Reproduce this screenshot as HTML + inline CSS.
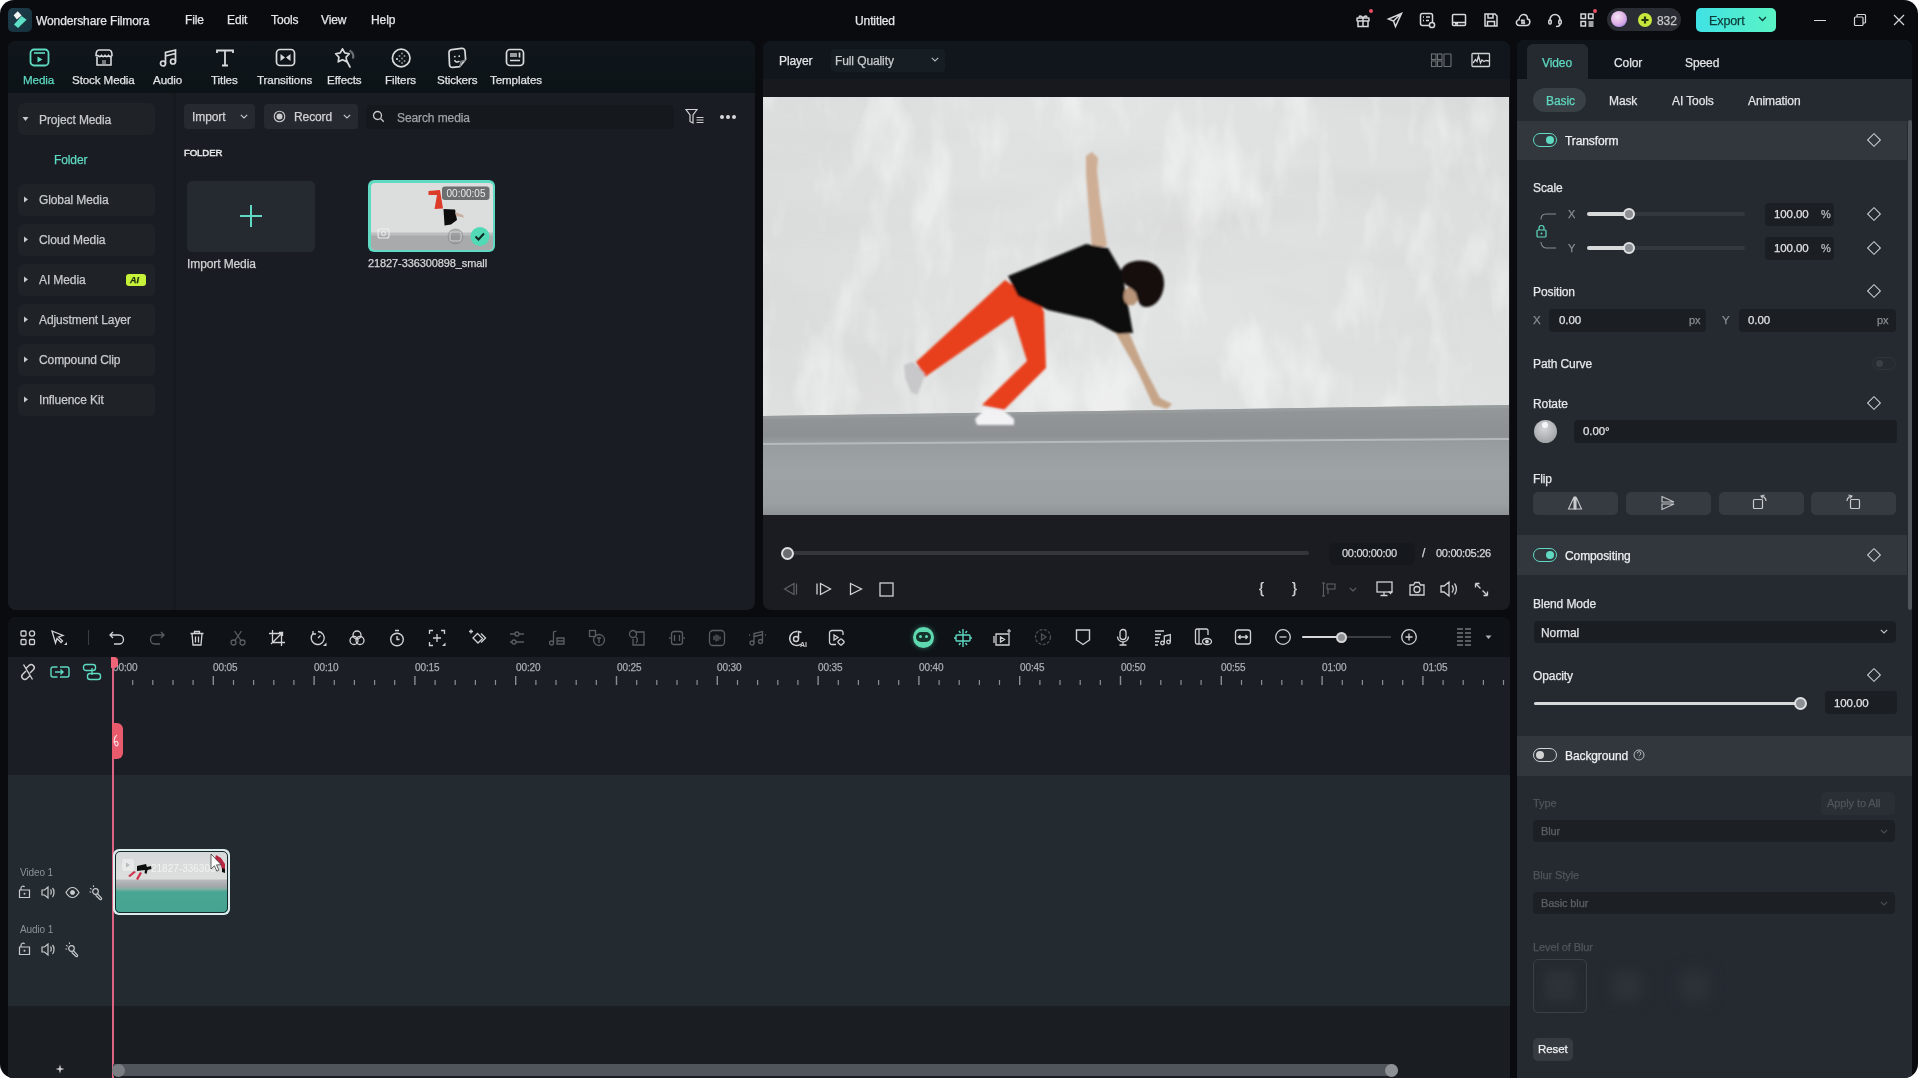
<!DOCTYPE html>
<html><head><meta charset="utf-8">
<style>
*{box-sizing:border-box;margin:0;padding:0}
html,body{width:1920px;height:1080px;overflow:hidden;background:#fff}
body{font-family:"Liberation Sans",sans-serif;color:#e6e8ea;position:relative}
.a{position:absolute}
#win{position:absolute;left:0;top:0;width:1918px;height:1078px;background:#090b0e;border-radius:14px;overflow:hidden}
.t{position:absolute;white-space:nowrap;line-height:1;will-change:transform;-webkit-text-stroke:0.25px currentColor;letter-spacing:-0.1px}
svg{position:absolute;overflow:visible;will-change:transform}
.ml{font-size:11.6px;color:#e0e2e4}
.si{left:18px;width:137px;border-radius:6px;background:#1f2328}
.sl{left:39px;font-size:12px;color:#c8cacc}
.lb{left:1533px;font-size:12px;color:#e6e8ea}
.tg{left:1533px;width:24px;height:14px;border-radius:7px;border:1.5px solid #5fd9c1}
.tk{left:1545.5px;width:8px;height:8px;border-radius:50%;background:#5fd9c1}
.dm{left:1868.5px;width:10px;height:10px;border:1.3px solid #d6d8da;transform:rotate(45deg)}
.fb{top:492px;width:85px;height:23px;border-radius:5px;background:#363b41}
</style></head><body>
<div id="win">
  <!-- ===== TITLE BAR ===== -->
  <div class="a" style="left:8px;top:8px;width:24px;height:24px;border-radius:5px;background:linear-gradient(135deg,#1f3d4c,#15303c)"></div>
  <svg style="left:0;top:0" width="40" height="40" viewBox="0 0 40 40">
    <path d="M17.8 11.3 L21.6 15.4 L16.8 19.4 L13.6 15.3 Z" fill="#f2f4f4"/>
    <path d="M21.6 16 L26.6 19.8 L18 28 L14 24.6 Z" fill="#5de0c6"/>
  </svg>
  <div class="t" style="left:36px;top:15px;font-size:12px;color:#e4e6e8">Wondershare Filmora</div>
  <div class="t" style="left:185px;top:14px;font-size:12px;color:#e4e6e8">File</div>
  <div class="t" style="left:227px;top:14px;font-size:12px;color:#e4e6e8">Edit</div>
  <div class="t" style="left:271px;top:14px;font-size:12px;color:#e4e6e8">Tools</div>
  <div class="t" style="left:321px;top:14px;font-size:12px;color:#e4e6e8">View</div>
  <div class="t" style="left:371px;top:14px;font-size:12px;color:#e4e6e8">Help</div>
  <div class="t" style="left:855px;top:15px;font-size:12px;color:#e4e6e8">Untitled</div>
  <!-- right icons -->
  <svg style="left:1355px;top:12px" width="16" height="16" viewBox="0 0 16 16" fill="none" stroke="#d6d8da" stroke-width="1.5">
    <rect x="2" y="6" width="12" height="3" rx="0.5"/><path d="M3 9v5.5h10V9M8 6v8.5M8 6C6 3 3.5 3.5 4.5 5.5M8 6c2-3 4.5-2.5 3.5-0.5"/>
  </svg>
  <div class="a" style="left:1369px;top:9px;width:4px;height:4px;border-radius:50%;background:#e8506a"></div>
  <svg style="left:1387px;top:12px" width="16" height="16" viewBox="0 0 16 16" fill="none" stroke="#d6d8da" stroke-width="1.5">
    <path d="M14.5 1.5L1.5 7l5 2 2 5.5 6-13z M6.5 9l8-7.5"/>
  </svg>
  <svg style="left:1419px;top:12px" width="16" height="16" viewBox="0 0 16 16" fill="none" stroke="#d6d8da" stroke-width="1.5">
    <rect x="1.5" y="1.5" width="12" height="12" rx="2"/><path d="M4 5h1M7 5h4M4 8.5h1M7 8.5h3"/><circle cx="13" cy="13" r="2.6" fill="#0a0c0f"/>
  </svg>
  <svg style="left:1451px;top:12px" width="16" height="16" viewBox="0 0 16 16" fill="none" stroke="#d6d8da" stroke-width="1.5">
    <rect x="1.5" y="2.5" width="13" height="11" rx="1"/><path d="M1.5 10.5h13M4 12h3"/>
  </svg>
  <svg style="left:1483px;top:12px" width="16" height="16" viewBox="0 0 16 16" fill="none" stroke="#d6d8da" stroke-width="1.5">
    <path d="M2 2h10l2 2v10H2z M5 2v4h5V2 M4.5 14v-4.5h7V14"/>
  </svg>
  <svg style="left:1515px;top:12px" width="16" height="16" viewBox="0 0 16 16" fill="none" stroke="#d6d8da" stroke-width="1.5">
    <path d="M4.5 13.5C2 13.5 1 11.5 1.5 9.8 2 8.3 3.3 7.8 4 7.8 4.3 4.5 6.5 2.5 8.5 2.5 11 2.5 12.5 4.5 12.5 7 14.3 7.3 15 9 14.8 10.5 14.5 12.5 13 13.5 11.5 13.5z M7 8v4M9 7.5v4M6 9l1-1 1 1M8 10.5l1 1 1-1"/>
  </svg>
  <svg style="left:1547px;top:12px" width="16" height="16" viewBox="0 0 16 16" fill="none" stroke="#d6d8da" stroke-width="1.5">
    <path d="M3 9V7.5a5 5 0 0 1 10 0V9"/><rect x="1.8" y="8" width="2.4" height="4" rx="1"/><rect x="11.8" y="8" width="2.4" height="4" rx="1"/><path d="M13 12c0 1.5-1.5 2.5-4 2.5"/>
  </svg>
  <svg style="left:1579px;top:12px" width="16" height="16" viewBox="0 0 16 16" fill="none" stroke="#d6d8da" stroke-width="1.5">
    <rect x="2" y="2" width="4.5" height="4.5"/><rect x="9.5" y="2" width="4.5" height="4.5"/><rect x="2" y="9.5" width="4.5" height="4.5"/><path d="M9.5 10h5M9.5 12h5M9.5 14h5"/>
  </svg>
  <div class="a" style="left:1593px;top:9px;width:4px;height:4px;border-radius:50%;background:#e8506a"></div>
  <!-- user pill -->
  <div class="a" style="left:1607px;top:8px;width:74px;height:23px;border-radius:12px;background:#2a2d33"></div>
  <div class="a" style="left:1611px;top:11px;width:16px;height:16px;border-radius:50%;background:radial-gradient(circle at 40% 35%,#f4e6f4 0%,#e0b0e6 50%,#b090e8 80%,#8ad0f0 100%)"></div>
  <div class="a" style="left:1638px;top:12.5px;width:14px;height:14px;border-radius:50%;background:#c8e83c"></div>
  <svg style="left:1638px;top:12.5px" width="14" height="14" viewBox="0 0 14 14"><path d="M7 3.5v7M3.5 7h7" stroke="#2a3a10" stroke-width="2.2"/></svg>
  <div class="t" style="left:1657px;top:15px;font-size:12px;color:#c6c8ca">832</div>
  <!-- export -->
  <div class="a" style="left:1696px;top:8px;width:80px;height:24px;border-radius:5px;background:linear-gradient(90deg,#40e2e4,#5af3c4)"></div>
  <div class="t" style="left:1709px;top:15px;font-size:12.5px;color:#0c3b38">Export</div>
  <svg style="left:1758px;top:16px" width="9" height="6" viewBox="0 0 9 6"><path d="M1 1l3.5 3.5L8 1" fill="none" stroke="#0c3b38" stroke-width="1.3"/></svg>
  <!-- window controls -->
  <div class="a" style="left:1814px;top:20px;width:12px;height:1.3px;background:#d6d8da"></div>
  <svg style="left:1853px;top:13px" width="14" height="14" viewBox="0 0 14 14" fill="none" stroke="#d6d8da" stroke-width="1.2">
    <rect x="1.5" y="4" width="8.5" height="8.5" rx="1"/><path d="M4 4V2.5a1 1 0 0 1 1-1h6.5a1 1 0 0 1 1 1V9a1 1 0 0 1-1 1H10"/>
  </svg>
  <svg style="left:1893px;top:14px" width="12" height="12" viewBox="0 0 12 12" stroke="#d6d8da" stroke-width="1.2"><path d="M1 1l10 10M11 1L1 11"/></svg>
  <!-- ===== MEDIA PANEL ===== -->
  <div class="a" style="left:8px;top:41px;width:747px;height:569px;background:#1a1c23;border-radius:8px;overflow:hidden">
    <div class="a" style="left:0;top:0;width:747px;height:52px;background:linear-gradient(180deg,#10161b,#0c1317)"></div>
    <div class="a" style="left:0;top:52px;width:165px;height:517px;background:#191c22"></div>
    <div class="a" style="left:165px;top:52px;width:3px;height:517px;background:#16191d"></div>
  </div>
  <!-- toolbar icons -->
  <svg style="left:29px;top:48px" width="22" height="20" viewBox="0 0 22 20" fill="none" stroke="#5fd9c1" stroke-width="1.8">
    <rect x="1.5" y="1.5" width="18" height="16" rx="3.5"/><path d="M5 5h11" stroke-width="1.6"/><path d="M8.5 8.5v6l5-3z" fill="#5fd9c1" stroke="none"/>
  </svg>
  <div class="t ml" style="left:23px;top:74px;color:#5fd9c1">Media</div>
  <svg style="left:94px;top:48px" width="20" height="20" viewBox="0 0 20 20" fill="none" stroke="#d8dadc" stroke-width="1.6">
    <path d="M3 8.5V17h14V8.5"/><path d="M2 7.5C2 4 3 2 5 2h10c2 0 3 2 3 5.5-1 1.5-2.5 1.5-3.5 0-1 1.5-2.5 1.5-3.5 0-1 1.5-2.5 1.5-3.5 0-1 1.5-2.5 1.5-3.5 0z"/><path d="M8 13h4M8 15h4" stroke-width="1.1"/>
  </svg>
  <div class="t ml" style="left:72px;top:74px">Stock Media</div>
  <svg style="left:158px;top:48px" width="20" height="20" viewBox="0 0 20 20" fill="none" stroke="#d8dadc" stroke-width="1.7">
    <circle cx="5" cy="15.5" r="2.5"/><circle cx="15" cy="13.5" r="2.5"/><path d="M7.5 15.5V4.5L17.5 2v11.5M7.5 8l10-2.5"/>
  </svg>
  <div class="t ml" style="left:153px;top:74px">Audio</div>
  <svg style="left:215px;top:48px" width="20" height="20" viewBox="0 0 20 20" fill="none" stroke="#d8dadc" stroke-width="1.8">
    <path d="M2 5V2.5h16V5M10 2.5v15M7 17.5h6"/>
  </svg>
  <div class="t ml" style="left:211px;top:74px">Titles</div>
  <svg style="left:275px;top:48px" width="21" height="20" viewBox="0 0 21 20" fill="none" stroke="#d8dadc" stroke-width="1.7">
    <rect x="1.5" y="1.5" width="18" height="16" rx="3.5"/><path d="M5.5 6v7l4.5-3.5z M15.5 6v7L11 9.5z" fill="#d8dadc" stroke="none"/>
  </svg>
  <div class="t ml" style="left:257px;top:74px">Transitions</div>
  <svg style="left:334px;top:47px" width="22" height="22" viewBox="0 0 22 22" fill="none" stroke="#d8dadc" stroke-width="1.7" stroke-linejoin="round">
    <path d="M8.50 1.80 L10.73 5.93 L15.35 6.78 L12.11 10.17 L12.73 14.82 L8.50 12.80 L4.27 14.82 L4.89 10.17 L1.65 6.78 L6.27 5.93 Z"/><path d="M12.5 13.5l3.5 6.5" stroke-linecap="round"/><path d="M15.5 3.5a7 7 0 0 1 3.5 8" stroke="#6a6e72" stroke-width="2.2"/>
  </svg>
  <div class="t ml" style="left:327px;top:74px">Effects</div>
  <svg style="left:390px;top:47px" width="22" height="22" viewBox="0 0 22 22" fill="none" stroke="#d8dadc" stroke-width="1.7">
    <circle cx="11.2" cy="11" r="8.8"/><g fill="#8a8e92" stroke="none"><circle cx="7" cy="12" r="1.1" fill="#d8dadc"/><circle cx="9.5" cy="9" r="1"/><circle cx="9.5" cy="14" r="1"/><circle cx="12" cy="6.5" r="1"/><circle cx="12" cy="11.5" r="1"/><circle cx="12" cy="16" r="1"/><circle cx="14.5" cy="9" r="1"/><circle cx="14.5" cy="14" r="1"/></g>
  </svg>
  <div class="t ml" style="left:385px;top:74px">Filters</div>
  <svg style="left:446px;top:47px" width="22" height="22" viewBox="0 0 22 22" fill="none" stroke="#d8dadc" stroke-width="1.7" stroke-linejoin="round">
    <path d="M3 6.5Q2.6 3.2 5.8 2.7L15.5 1.4Q18.6 1 19 4.2L19.6 12.5L13.6 19.6L7 20.4Q3.8 20.8 3.5 17.6Z"/><path d="M19.6 13L15 14.5L14 19.5" stroke="#7a7e82" stroke-width="1.6"/><circle cx="8.8" cy="9.6" r=".9" fill="#d8dadc" stroke="none"/><circle cx="13.2" cy="9.2" r=".9" fill="#d8dadc" stroke="none"/><path d="M8.5 13.2Q10 16.2 13.5 14.2" stroke-width="1.5"/>
  </svg>
  <div class="t ml" style="left:437px;top:74px">Stickers</div>
  <svg style="left:505px;top:48px" width="20" height="20" viewBox="0 0 20 20" fill="none" stroke="#d8dadc" stroke-width="1.7">
    <rect x="1.5" y="1.5" width="17" height="16" rx="3.5"/><rect x="5" y="5" width="7" height="4" fill="#9a9c9e" stroke="none"/><path d="M14.5 4.5v5M5 12.5h10"/>
  </svg>
  <div class="t ml" style="left:490px;top:74px">Templates</div>

  <!-- sidebar -->
  <div class="a si" style="top:103px;height:32px"></div>
  <svg style="left:22px;top:116px" width="7" height="6" viewBox="0 0 7 6"><path d="M0.5 1h6L3.5 5z" fill="#c8cacc"/></svg>
  <div class="t sl" style="top:114px">Project Media</div>
  <div class="t sl" style="left:54px;top:154px;color:#5fd9c1">Folder</div>
  <div class="a si" style="top:184px;height:32px"></div>
  <svg style="left:23px;top:196px" width="6" height="7" viewBox="0 0 6 7"><path d="M1 0.5v6L5 3.5z" fill="#c8cacc"/></svg>
  <div class="t sl" style="top:194px">Global Media</div>
  <div class="a si" style="top:224px;height:32px"></div>
  <svg style="left:23px;top:236px" width="6" height="7" viewBox="0 0 6 7"><path d="M1 0.5v6L5 3.5z" fill="#c8cacc"/></svg>
  <div class="t sl" style="top:234px">Cloud Media</div>
  <div class="a si" style="top:264px;height:32px"></div>
  <svg style="left:23px;top:276px" width="6" height="7" viewBox="0 0 6 7"><path d="M1 0.5v6L5 3.5z" fill="#c8cacc"/></svg>
  <div class="t sl" style="top:274px">AI Media</div>
  <div class="a" style="left:126px;top:274px;width:20px;height:12px;border-radius:3px;background:#c6f23a"></div>
  <div class="t" style="left:130px;top:275.5px;font-size:9px;font-weight:bold;font-style:italic;color:#1a2a10">AI</div>
  <div class="a si" style="top:304px;height:32px"></div>
  <svg style="left:23px;top:316px" width="6" height="7" viewBox="0 0 6 7"><path d="M1 0.5v6L5 3.5z" fill="#c8cacc"/></svg>
  <div class="t sl" style="top:314px">Adjustment Layer</div>
  <div class="a si" style="top:344px;height:32px"></div>
  <svg style="left:23px;top:356px" width="6" height="7" viewBox="0 0 6 7"><path d="M1 0.5v6L5 3.5z" fill="#c8cacc"/></svg>
  <div class="t sl" style="top:354px">Compound Clip</div>
  <div class="a si" style="top:384px;height:32px"></div>
  <svg style="left:23px;top:396px" width="6" height="7" viewBox="0 0 6 7"><path d="M1 0.5v6L5 3.5z" fill="#c8cacc"/></svg>
  <div class="t sl" style="top:394px">Influence Kit</div>

  <!-- media content toolbar -->
  <div class="a" style="left:184px;top:104px;width:71px;height:25px;border-radius:4px;background:#262a30"></div>
  <div class="t" style="left:192px;top:111px;font-size:12px;color:#d0d2d4">Import</div>
  <svg style="left:240px;top:114px" width="8" height="5" viewBox="0 0 8 5"><path d="M0.8 0.8L4 4 7.2 0.8" fill="none" stroke="#c8cacc" stroke-width="1.1"/></svg>
  <div class="a" style="left:264px;top:104px;width:94px;height:25px;border-radius:4px;background:#262a30"></div>
  <svg style="left:273px;top:110px" width="13" height="13" viewBox="0 0 13 13"><circle cx="6.5" cy="6.5" r="5.3" fill="none" stroke="#c8cacc" stroke-width="1.1"/><circle cx="6.5" cy="6.5" r="3" fill="#c8cacc"/></svg>
  <div class="t" style="left:294px;top:111px;font-size:12px;color:#d0d2d4">Record</div>
  <svg style="left:343px;top:114px" width="8" height="5" viewBox="0 0 8 5"><path d="M0.8 0.8L4 4 7.2 0.8" fill="none" stroke="#c8cacc" stroke-width="1.1"/></svg>
  <div class="a" style="left:366px;top:105px;width:308px;height:24px;border-radius:4px;background:#15181c"></div>
  <svg style="left:372px;top:110px" width="13" height="13" viewBox="0 0 13 13" fill="none" stroke="#c8cacc" stroke-width="1.3"><circle cx="5.5" cy="5.5" r="4"/><path d="M8.5 8.5l3.3 3.3"/></svg>
  <div class="t" style="left:397px;top:112px;font-size:12px;color:#9ea2a6">Search media</div>
  <svg style="left:685px;top:108px" width="20" height="17" viewBox="0 0 20 17" fill="none" stroke="#d0d2d4" stroke-width="1.2"><path d="M1 1.5h11L8 7v8l-3-1.5V7z"/><path d="M11.5 9.5h7M11.5 12h7M11.5 14.5h7"/></svg>
  <div class="a" style="left:720px;top:115px;width:4px;height:4px;border-radius:50%;background:#d8dadc"></div>
  <div class="a" style="left:726px;top:115px;width:4px;height:4px;border-radius:50%;background:#d8dadc"></div>
  <div class="a" style="left:732px;top:115px;width:4px;height:4px;border-radius:50%;background:#d8dadc"></div>

  <div class="t" style="left:184px;top:147.5px;font-size:9.6px;color:#e6e8ea;-webkit-text-stroke:0.45px #e6e8ea">FOLDER</div>
  <!-- import media tile -->
  <div class="a" style="left:187px;top:181px;width:128px;height:71px;border-radius:5px;background:#242a30"></div>
  <svg style="left:239px;top:204px" width="24" height="24" viewBox="0 0 24 24"><path d="M12 1v22M1 12h22" stroke="#5fd9c1" stroke-width="2"/></svg>
  <div class="t" style="left:187px;top:258px;font-size:12px;color:#d0d2d4">Import Media</div>
  <!-- media thumbnail -->
  <div class="a" style="left:368px;top:180px;width:127px;height:72px;border-radius:6px;background:#5fd9c1"></div>
  <svg style="left:370.5px;top:182.5px" width="122" height="67" viewBox="0 0 122 67">
    <defs><clipPath id="thc"><rect x="0" y="0" width="122" height="67" rx="4"/></clipPath><filter id="tb"><feGaussianBlur stdDeviation="0.7"/></filter></defs>
    <g clip-path="url(#thc)">
      <rect width="122" height="67" fill="#dcdddd"/>
      <rect x="0" y="51" width="122" height="16" fill="#a8aaac"/>
      <rect x="0" y="49.5" width="122" height="3" fill="#bcbebf"/>
      <g filter="url(#tb)">
        <path d="M57.5 8 L69 7 L72 25.5 L63.5 26 L66 12 L57.5 12 Z" fill="#dd3a2a"/>
        <path d="M72.5 26 L84 26.5 L86 37 L80 41.5 L73.5 42.5 Z" fill="#111"/>
        <path d="M84 29 L92 32 L93 34.5 L85 33 Z" fill="#c8b0a0"/>
      </g>
      <rect x="71" y="3.5" width="47.5" height="13.5" rx="3" fill="#656769" opacity="0.95"/>
      <text x="95" y="13.7" text-anchor="middle" font-family="Liberation Sans" font-size="10" fill="#e8eaec">00:00:05</text>
      <rect x="7" y="46" width="11" height="9" rx="2" fill="none" stroke="#f4f4f4" stroke-width="1.1" opacity="0.85"/>
      <circle cx="12.5" cy="50.5" r="2" fill="none" stroke="#f4f4f4" stroke-width="1" opacity="0.85"/>
      <circle cx="84.5" cy="53.5" r="8" fill="#8a8c8e" opacity="0.6"/>
      <rect x="79" y="49" width="11" height="9" rx="2" fill="none" stroke="#e8e8e8" stroke-width="1" opacity="0.7"/>
      <circle cx="109" cy="53.5" r="9.5" fill="#52d9b6"/>
      <path d="M104.5 53.5l3 3 5.5-6" fill="none" stroke="#0d2a22" stroke-width="2"/>
    </g>
  </svg>
  <div class="t" style="left:368px;top:258px;font-size:11px;color:#d6d8da">21827-336300898_small</div>
  <!-- ===== PLAYER PANEL ===== -->
  <div class="a" style="left:763px;top:41px;width:747px;height:569px;background:#1a1c21;border-radius:8px;overflow:hidden">
    <div class="a" style="left:0;top:0;width:747px;height:38px;background:#10161b"></div>
    <div class="a" style="left:0;top:38px;width:747px;height:18px;background:#17191e"></div>
  </div>
  <div class="t" style="left:779px;top:55px;font-size:12px;color:#e2e4e6">Player</div>
  <div class="a" style="left:831px;top:49px;width:114px;height:23px;border-radius:4px;background:#161d23"></div>
  <div class="t" style="left:835px;top:55px;font-size:12px;color:#c8cacc">Full Quality</div>
  <svg style="left:931px;top:57px" width="8" height="5" viewBox="0 0 8 5"><path d="M0.8 0.8L4 4 7.2 0.8" fill="none" stroke="#b8babc" stroke-width="1.1"/></svg>
  <svg style="left:1431px;top:53px" width="21" height="15" viewBox="0 0 21 15" fill="none" stroke="#6e7276" stroke-width="1.1">
    <rect x="0.5" y="1" width="4.5" height="5.5"/><rect x="6.5" y="1" width="4.5" height="5.5"/><rect x="0.5" y="8" width="4.5" height="5.5"/><rect x="6.5" y="8" width="4.5" height="5.5"/><rect x="13" y="1" width="7" height="12.5" rx="0.5"/>
  </svg>
  <svg style="left:1471px;top:52px" width="20" height="16" viewBox="0 0 20 16" fill="none" stroke="#d0d2d4" stroke-width="1.3">
    <rect x="1" y="1.5" width="17.5" height="13" rx="0.8"/><path d="M2 11l2.5-3.5L6 9.5 7.5 4l2 7 1.5-3 2 1.5 2-1 3 0.5"/>
  </svg>
  <!-- video frame -->
  <svg style="left:763px;top:97px" width="746" height="418" viewBox="763 97 746 418">
    <defs>
      <linearGradient id="wallg" x1="0" y1="0" x2="1" y2="0">
        <stop offset="0" stop-color="#dcdedd"/><stop offset="0.45" stop-color="#e2e4e3"/><stop offset="1" stop-color="#dcdedd"/>
      </linearGradient>
      <linearGradient id="groundg" x1="0" y1="405" x2="0" y2="515" gradientUnits="userSpaceOnUse">
        <stop offset="0" stop-color="#939798"/><stop offset="0.28" stop-color="#8d9193"/><stop offset="0.34" stop-color="#979c9f"/><stop offset="0.6" stop-color="#9ea3a6"/><stop offset="0.9" stop-color="#9a9fa2"/><stop offset="1" stop-color="#8e9295"/>
      </linearGradient>
      <filter id="tex" x="0" y="0" width="100%" height="100%">
        <feTurbulence type="fractalNoise" baseFrequency="0.003 0.012" numOctaves="3" seed="11" result="n"/>
        <feColorMatrix in="n" type="matrix" values="0 0 0 0 0.6  0 0 0 0 0.6  0 0 0 0 0.6  -3 0 0 0 1.6"/>
      </filter>
      <filter id="tex2" x="0" y="0" width="100%" height="100%">
        <feTurbulence type="fractalNoise" baseFrequency="0.022 0.009" numOctaves="4" seed="5" result="n"/>
        <feColorMatrix in="n" type="matrix" values="0 0 0 0 1  0 0 0 0 1  0 0 0 0 1  3.5 0 0 0 -1.7"/>
      </filter>
      <linearGradient id="wallbot" x1="0" y1="0" x2="0" y2="1"><stop offset="0" stop-color="#e4e5e5" stop-opacity="0"/><stop offset="1" stop-color="#e4e5e5" stop-opacity="0.5"/></linearGradient>
      <filter id="bl2"><feGaussianBlur stdDeviation="1"/></filter>
    </defs>
    <rect x="763" y="97" width="746" height="418" fill="url(#wallg)"/>
    <rect x="763" y="97" width="746" height="320" filter="url(#tex)" opacity="0.3"/>
    <rect x="763" y="300" width="746" height="120" fill="url(#wallbot)"/>
    <rect x="763" y="97" width="746" height="320" filter="url(#tex2)" opacity="0.4"/>
    <path d="M763 416 L1509 405 L1509 515 L763 515 Z" fill="url(#groundg)"/>
    <path d="M763 416 L1509 405 L1509 408 L763 419 Z" fill="#9a9ea0" opacity="0.7"/>
    <path d="M763 444 L1509 439" stroke="#c4c8ca" stroke-width="2" opacity="0.7"/>
    <g filter="url(#bl2)">
      <!-- raised arm -->
      <path d="M1086 156 L1092 152 L1098 158 L1097 170 L1100 200 L1107 246 L1092 249 L1088 200 L1086 175 Z" fill="#cfae96"/>
      <!-- lower arm -->
      <path d="M1114 330 L1127 328 L1143 365 L1160 398 L1172 404 L1167 409 L1153 405 L1138 372 Z" fill="#c6a488"/>
      <!-- pants -->
      <path d="M1005 280 L916 362 L925 377 L1013 316 L1027 361 L982 405 L1004 410 L1046 368 L1044 312 L1040 304 Z" fill="#e8401e"/>
      <!-- shirt -->
      <path d="M1008 276 L1086 244 L1108 248 L1122 272 L1133 333 L1118 334 L1092 320 L1048 310 L1018 296 Z" fill="#0b0b0c"/>
      <!-- head -->
      <ellipse cx="1131" cy="296" rx="7.5" ry="9.5" fill="#b89478"/>
      <path d="M1121 277 C1118 266 1131 259 1144 261 C1157 262 1165 273 1164 285 C1163 297 1156 307 1146 307 C1139 307 1138 300 1136 293 C1132 287 1123 286 1121 277 Z" fill="#141110"/>
      <!-- shoes -->
      <path d="M904 365 L913 362 L925 374 L920 388 L917 395 L911 392 L905 378 Z" fill="#c8c8ca"/>
      <path d="M975 419 L985 409 L1003 410 L1014 419 L1014 425 L977 425 Z" fill="#f2f2f4"/>
    </g>
  </svg>
  <!-- scrubber -->
  <div class="a" style="left:793px;top:551px;width:516px;height:4px;border-radius:2px;background:#33373c"></div>
  <div class="a" style="left:780.5px;top:546.5px;width:13px;height:13px;border-radius:50%;background:#6a6d70;border:2px solid #dcdee0"></div>
  <div class="a" style="left:1329px;top:543px;width:86px;height:22px;border-radius:6px;background:#15181c"></div>
  <div class="t" style="left:1342px;top:548px;font-size:11px;color:#d6d8da;letter-spacing:-0.3px">00:00:00:00</div>
  <div class="t" style="left:1422px;top:547px;font-size:12px;color:#d6d8da">/</div>
  <div class="t" style="left:1436px;top:548px;font-size:11px;color:#d6d8da;letter-spacing:-0.3px">00:00:05:26</div>
  <!-- controls -->
  <svg style="left:783px;top:582px" width="15" height="14" viewBox="0 0 15 14" fill="none" stroke="#5e6266" stroke-width="1.2"><path d="M11 1.5L1.5 7l9.5 5.5z M13.5 1.5v11"/></svg>
  <svg style="left:816px;top:582px" width="16" height="14" viewBox="0 0 16 14" fill="none" stroke="#d0d2d4" stroke-width="1.3"><path d="M1 1.5v11 M4.5 1.5L14.5 7 4.5 12.5z"/></svg>
  <svg style="left:849px;top:582px" width="14" height="14" viewBox="0 0 14 14" fill="none" stroke="#d0d2d4" stroke-width="1.3"><path d="M1.5 1.5L12.5 7 1.5 12.5z"/></svg>
  <svg style="left:879px;top:582px" width="15" height="15" viewBox="0 0 15 15" fill="none" stroke="#d0d2d4" stroke-width="1.3"><rect x="1" y="1" width="13" height="13"/></svg>
  <div class="t" style="left:1259px;top:580px;font-size:15px;color:#d0d2d4">{</div>
  <div class="t" style="left:1292px;top:580px;font-size:15px;color:#d0d2d4">}</div>
  <svg style="left:1322px;top:582px" width="15" height="15" viewBox="0 0 15 15" fill="none" stroke="#5e6266" stroke-width="1.1"><path d="M1.5 1v13 M0 1h3M0 14h3 M5 2h8v5H5z M6 7v5"/></svg>
  <svg style="left:1349px;top:587px" width="8" height="5" viewBox="0 0 8 5"><path d="M0.8 0.8L4 4 7.2 0.8" fill="none" stroke="#5e6266" stroke-width="1.1"/></svg>
  <svg style="left:1376px;top:581px" width="18" height="16" viewBox="0 0 18 16" fill="none" stroke="#d0d2d4" stroke-width="1.3"><rect x="1" y="1" width="15" height="10"/><path d="M8 11v3.5M4.5 14.5h7"/><path d="M12 10.5h5l-2.5 3z" fill="#d0d2d4" stroke="none"/></svg>
  <svg style="left:1409px;top:581px" width="16" height="15" viewBox="0 0 16 15" fill="none" stroke="#d0d2d4" stroke-width="1.3"><path d="M1 4h3.5L6 1.5h4L11.5 4H15v10H1z"/><circle cx="8" cy="8.5" r="3"/></svg>
  <svg style="left:1440px;top:581px" width="18" height="16" viewBox="0 0 18 16" fill="none" stroke="#d0d2d4" stroke-width="1.3"><path d="M1 5h3l5-4v14l-5-4H1z M12 4.5c1.5 2 1.5 5 0 7 M14.5 2.5c2.5 3 2.5 8 0 11"/></svg>
  <svg style="left:1474px;top:582px" width="15" height="15" viewBox="0 0 15 15" fill="none" stroke="#d0d2d4" stroke-width="1.3"><path d="M1.5 1.5l5 5M1.5 1.5h4M1.5 1.5v4 M13.5 13.5l-5-5M13.5 13.5h-4M13.5 13.5v-4"/></svg>
  <!-- ===== TIMELINE ===== -->
  <div class="a" style="left:8px;top:617px;width:1502px;height:461px;background:#1a1d22;border-radius:8px 8px 0 0;overflow:hidden">
    <div class="a" style="left:0;top:0;width:1502px;height:40px;background:#0f1318"></div>
    <div class="a" style="left:0;top:40px;width:1502px;height:118px;background:#1b1e24"></div>
    <div class="a" style="left:0;top:158px;width:1502px;height:231px;background:#232a30"></div>
    <div class="a" style="left:0;top:389px;width:1502px;height:72px;background:#1a1d22"></div>
  </div>
  <!-- toolbar -->
  <g></g>
  <svg style="left:19px;top:629px" width="18" height="18" viewBox="0 0 18 18" fill="none" stroke="#d0d2d4" stroke-width="1.3">
    <rect x="2" y="2" width="5" height="5" rx="1"/><rect x="2" y="10.5" width="5" height="5" rx="1"/><rect x="10.5" y="10.5" width="5" height="5" rx="1"/><circle cx="13" cy="4.5" r="2.6"/>
  </svg>
  <svg style="left:50px;top:629px" width="18" height="18" viewBox="0 0 18 18" fill="none" stroke="#d0d2d4" stroke-width="1.3">
    <path d="M2 2l11 4.5-4.5 1.5 4 4-1.5 1.5-4-4L5.5 14z"/><path d="M14 16h3v-3z" fill="#d0d2d4" stroke="none"/>
  </svg>
  <div class="a" style="left:87.5px;top:630px;width:1px;height:15px;background:#3a3e42"></div>
  <svg style="left:108px;top:629px" width="18" height="18" viewBox="0 0 18 18" fill="none" stroke="#d0d2d4" stroke-width="1.3">
    <path d="M5 3L2 6l3 3 M2 6h9a4.5 4.5 0 0 1 0 9H6"/>
  </svg>
  <svg style="left:148px;top:629px" width="18" height="18" viewBox="0 0 18 18" fill="none" stroke="#5a5e62" stroke-width="1.3">
    <path d="M13 3l3 3-3 3 M16 6H7a4.5 4.5 0 0 0 0 9h5"/>
  </svg>
  <svg style="left:188px;top:629px" width="18" height="18" viewBox="0 0 18 18" fill="none" stroke="#d0d2d4" stroke-width="1.3">
    <path d="M2.5 4.5h13 M6.5 4.5V2.5h5v2 M4 4.5l1 11.5h8l1-11.5 M7.5 7.5v6M10.5 7.5v6"/>
  </svg>
  <svg style="left:229px;top:629px" width="18" height="18" viewBox="0 0 18 18" fill="none" stroke="#5a5e62" stroke-width="1.3">
    <circle cx="4.5" cy="13.5" r="2.5"/><circle cx="13.5" cy="13.5" r="2.5"/><path d="M6 11.5L12.5 2M12 11.5L5.5 2"/>
  </svg>
  <svg style="left:268px;top:629px" width="18" height="18" viewBox="0 0 18 18" fill="none" stroke="#d0d2d4" stroke-width="1.3">
    <path d="M4.5 1v12.5H17 M1 4.5h12.5V17 M3 15l12-12 M11 3.5h3.5V7"/>
  </svg>
  <svg style="left:309px;top:629px" width="18" height="18" viewBox="0 0 18 18" fill="none" stroke="#d0d2d4" stroke-width="1.3">
    <path d="M4 4.5A6.5 6.5 0 1 0 9 2.5"/><path d="M4 2v3h3 M9 9l2.5-2.5"/><path d="M14 17h3.5v-3.5z" fill="#d0d2d4" stroke="none"/>
  </svg>
  <svg style="left:348px;top:629px" width="18" height="18" viewBox="0 0 18 18" fill="none" stroke="#d0d2d4" stroke-width="1.3">
    <circle cx="9" cy="6" r="4"/><circle cx="6" cy="11.5" r="4"/><circle cx="12" cy="11.5" r="4"/>
  </svg>
  <svg style="left:388px;top:629px" width="18" height="18" viewBox="0 0 18 18" fill="none" stroke="#d0d2d4" stroke-width="1.4">
    <circle cx="9" cy="10.5" r="6.3"/><path d="M7 1.5h4 M9 7v3.5h2.5"/>
  </svg>
  <svg style="left:428px;top:629px" width="18" height="18" viewBox="0 0 18 18" fill="none" stroke="#d0d2d4" stroke-width="1.3">
    <path d="M1.5 5V1.5H5 M13 1.5h3.5V5 M1.5 13v3.5H5 M9 5v8M5 9h8"/><path d="M14 17h3.5v-3.5z" fill="#d0d2d4" stroke="none"/>
  </svg>
  <svg style="left:468px;top:629px" width="18" height="18" viewBox="0 0 18 18" fill="none" stroke="#d0d2d4" stroke-width="1.3">
    <path d="M3 0.5v4M1 2.5h4 M9.5 4.5l5 5-4.5 4.5-5-5z M13 4.5l4.5 4.5-4.5 4.5"/>
  </svg>
  <svg style="left:508px;top:629px" width="18" height="18" viewBox="0 0 18 18" fill="none" stroke="#5a5e62" stroke-width="1.3">
    <path d="M2 5h5M11 5h5M2 13h2M8 13h8"/><circle cx="9" cy="5" r="2"/><circle cx="6" cy="13" r="2"/>
  </svg>
  <svg style="left:548px;top:629px" width="18" height="18" viewBox="0 0 18 18" fill="none" stroke="#5a5e62" stroke-width="1.3">
    <circle cx="3.5" cy="14" r="2"/><path d="M5.5 14V3l3-1 M9 9h7v3H9z M9 12h7v3H9z"/>
  </svg>
  <svg style="left:588px;top:629px" width="18" height="18" viewBox="0 0 18 18" fill="none" stroke="#5a5e62" stroke-width="1.3">
    <rect x="1.5" y="1.5" width="6" height="6"/><circle cx="11" cy="11" r="5.5"/><path d="M9 9h4M11 9v5"/>
  </svg>
  <svg style="left:628px;top:629px" width="18" height="18" viewBox="0 0 18 18" fill="none" stroke="#5a5e62" stroke-width="1.3">
    <circle cx="5" cy="5" r="3.5"/><path d="M7 3h9v13H5v-6 M8 8a4 4 0 0 1 0 6"/>
  </svg>
  <svg style="left:668px;top:629px" width="18" height="18" viewBox="0 0 18 18" fill="none" stroke="#5a5e62" stroke-width="1.3">
    <rect x="3.5" y="2.5" width="11" height="13" rx="2.5"/><path d="M1 9h1.5M15.5 9H17 M6.5 6v6M11.5 6v6"/>
  </svg>
  <svg style="left:708px;top:629px" width="18" height="18" viewBox="0 0 18 18" fill="none" stroke="#5a5e62" stroke-width="1.3">
    <rect x="1.5" y="1.5" width="15" height="15" rx="3.5"/><path d="M6 7v4M8 5.5v7M10 6v6M12 7.5v3"/>
  </svg>
  <svg style="left:748px;top:629px" width="18" height="18" viewBox="0 0 18 18" fill="none" stroke="#5a5e62" stroke-width="1.3">
    <circle cx="4" cy="14" r="2"/><circle cx="12.5" cy="12.5" r="2"/><path d="M6 14V4.5l8.5-2v10 M6 7.5l8.5-2"/><path d="M1 6h1M17 6h1"/>
  </svg>
  <svg style="left:788px;top:629px" width="18" height="18" viewBox="0 0 18 18" fill="none" stroke="#d0d2d4" stroke-width="1.4">
    <path d="M9.5 2.5A7 7 0 1 0 13 15"/><circle cx="8" cy="10" r="2.5"/><path d="M10.5 10V2.5l3 1"/><text x="12" y="17.5" font-size="7" font-family="Liberation Sans" font-weight="bold" fill="#d0d2d4" stroke="none">AI</text>
  </svg>
  <svg style="left:828px;top:629px" width="18" height="18" viewBox="0 0 18 18" fill="none" stroke="#d0d2d4" stroke-width="1.3">
    <path d="M15 6V3.5A2 2 0 0 0 13 1.5H4A2.5 2.5 0 0 0 1.5 4v9A2.5 2.5 0 0 0 4 15.5h4"/><path d="M6 6v5l4-2.5z"/><rect x="10.5" y="10.5" width="5" height="5" rx="1" transform="rotate(45 13 13)"/>
  </svg>
  <!-- right toolbar group -->
  <div class="a" style="left:912.5px;top:627px;width:21px;height:21px;border-radius:50%;background:#5fd9b0;box-shadow:0 0 5px rgba(95,217,176,.45)"></div>
  <div class="a" style="left:915.5px;top:632px;width:15px;height:10px;border-radius:5px;background:#17342c"></div>
  <div class="a" style="left:918.5px;top:635px;width:3px;height:3px;border-radius:50%;background:#5fd9b0"></div>
  <div class="a" style="left:924.5px;top:635px;width:3px;height:3px;border-radius:50%;background:#5fd9b0"></div>
  <svg style="left:953px;top:628px" width="20" height="20" viewBox="0 0 20 20" fill="none" stroke="#5fd9c1" stroke-width="1.4">
    <rect x="3" y="7" width="14" height="6" rx="1"/><path d="M10 1v18 M6 3l1.5 2M14 3l-1.5 2M6 17l1.5-2M14 17l-1.5-2 M1 10h2M17 10h2"/>
  </svg>
  <svg style="left:993px;top:628px" width="20" height="20" viewBox="0 0 20 20" fill="none" stroke="#d0d2d4" stroke-width="1.3">
    <path d="M3 6h13v11H3z M1 8v7 M7.5 9v5l4-2.5z"/><path d="M16 1v4M14 3h4" stroke-width="1.2"/>
  </svg>
  <svg style="left:1034px;top:628px" width="18" height="18" viewBox="0 0 18 18" fill="none" stroke="#4e5256" stroke-width="1.3">
    <circle cx="9" cy="9" r="7.5" stroke-dasharray="3 1.5"/><path d="M7.5 6v6l4.5-3z"/>
  </svg>
  <svg style="left:1074px;top:628px" width="18" height="18" viewBox="0 0 18 18" fill="none" stroke="#d0d2d4" stroke-width="1.4">
    <path d="M2.5 2h13v10l-6.5 4.5L2.5 12z"/>
  </svg>
  <svg style="left:1114px;top:628px" width="18" height="18" viewBox="0 0 18 18" fill="none" stroke="#d0d2d4" stroke-width="1.3">
    <rect x="6" y="1.5" width="6" height="10" rx="3"/><path d="M3.5 8.5a5.5 5.5 0 0 0 11 0 M9 14v3M5.5 17h7"/>
  </svg>
  <svg style="left:1154px;top:628px" width="18" height="18" viewBox="0 0 18 18" fill="none" stroke="#d0d2d4" stroke-width="1.3">
    <path d="M1 3h9M1 6.5h6M1 10h5M1 13.5h4M1 17h3"/><circle cx="8.5" cy="15" r="1.8"/><circle cx="14.5" cy="14" r="1.8"/><path d="M10.3 15V8l6-1.5V14"/>
  </svg>
  <svg style="left:1194px;top:628px" width="18" height="18" viewBox="0 0 18 18" fill="none" stroke="#d0d2d4" stroke-width="1.3">
    <path d="M14 7V2.5A1.5 1.5 0 0 0 12.5 1H3a1.5 1.5 0 0 0-1.5 1.5v12A1.5 1.5 0 0 0 3 16h5 M5 1v15"/><ellipse cx="13" cy="13.5" rx="4.5" ry="3"/><circle cx="13" cy="13.5" r="1.2" fill="#d0d2d4"/>
  </svg>
  <svg style="left:1234px;top:628px" width="18" height="18" viewBox="0 0 18 18" fill="none" stroke="#d0d2d4" stroke-width="1.3">
    <rect x="1.5" y="2" width="15" height="14" rx="2.5"/><path d="M4.5 9h9 M6.5 7l-2 2 2 2 M11.5 7l2 2-2 2"/>
  </svg>
  <svg style="left:1274px;top:628px" width="18" height="18" viewBox="0 0 18 18" fill="none" stroke="#d0d2d4" stroke-width="1.3">
    <circle cx="9" cy="9" r="7.3"/><path d="M5.5 9h7"/>
  </svg>
  <div class="a" style="left:1302px;top:636px;width:89px;height:1.5px;background:#3a3e42"></div>
  <div class="a" style="left:1302px;top:635.5px;width:40px;height:2.5px;border-radius:1px;background:#d6d8da"></div>
  <div class="a" style="left:1336px;top:631.5px;width:11px;height:11px;border-radius:50%;background:#8e9194;border:2px solid #d6d8da"></div>
  <svg style="left:1400px;top:628px" width="18" height="18" viewBox="0 0 18 18" fill="none" stroke="#d0d2d4" stroke-width="1.3">
    <circle cx="9" cy="9" r="7.3"/><path d="M5.5 9h7M9 5.5v7"/>
  </svg>
  <svg style="left:1457px;top:627px" width="15" height="21" viewBox="0 0 15 21" fill="#5a5e62">
    <rect x="0" y="1" width="6" height="2"/><rect x="8" y="1" width="6" height="2"/><rect x="0" y="5" width="6" height="2"/><rect x="8" y="5" width="6" height="2"/><rect x="0" y="9" width="6" height="2"/><rect x="8" y="9" width="6" height="2"/><rect x="0" y="13" width="6" height="2"/><rect x="8" y="13" width="6" height="2"/><rect x="0" y="17" width="6" height="2"/><rect x="8" y="17" width="6" height="2"/>
  </svg>
  <svg style="left:1485px;top:635px" width="7" height="5" viewBox="0 0 7 5"><path d="M0.5 0.5h6L3.5 4z" fill="#b0b2b4"/></svg>
  <!-- second row -->
  <svg style="left:19px;top:663px" width="18" height="18" viewBox="0 0 18 18" fill="none" stroke="#d0d2d4" stroke-width="1.4">
    <path d="M7 5.5l3-3a3 3 0 0 1 4.3 4.3L11 10 M11 12.5l-3 3a3 3 0 0 1-4.3-4.3L7 8 M4.5 1.5l9 15"/>
  </svg>
  <svg style="left:50px;top:664px" width="20" height="16" viewBox="0 0 20 16" fill="none" stroke="#5fd9c1" stroke-width="1.4">
    <path d="M7.5 3H3a2 2 0 0 0-2 2v6a2 2 0 0 0 2 2h4.5 M10 3h7a2 2 0 0 1 2 2v6a2 2 0 0 1-2 2h-7"/><path d="M5 8h8 M10.5 5.5L13 8l-2.5 2.5"/>
  </svg>
  <svg style="left:82px;top:663px" width="20" height="18" viewBox="0 0 20 18" fill="none" stroke="#5fd9c1" stroke-width="1.4">
    <rect x="1.5" y="1.5" width="12" height="6" rx="2.5"/><rect x="5.5" y="10.5" width="13" height="6" rx="2.5"/><path d="M10 5v7"/>
  </svg>
  <!-- ruler -->
  <style>.rl{top:663px;font-size:10px;color:#a9adb1}</style>
<div class="t rl" style="left:112.5px">00:00</div>
<div class="t rl" style="left:213.3px">00:05</div>
<div class="t rl" style="left:314.1px">00:10</div>
<div class="t rl" style="left:414.9px">00:15</div>
<div class="t rl" style="left:515.7px">00:20</div>
<div class="t rl" style="left:616.5px">00:25</div>
<div class="t rl" style="left:717.3px">00:30</div>
<div class="t rl" style="left:818.1px">00:35</div>
<div class="t rl" style="left:918.9px">00:40</div>
<div class="t rl" style="left:1019.7px">00:45</div>
<div class="t rl" style="left:1120.5px">00:50</div>
<div class="t rl" style="left:1221.3px">00:55</div>
<div class="t rl" style="left:1322.1px">01:00</div>
<div class="t rl" style="left:1422.9px">01:05</div>
<svg style="left:0;top:0" width="1510" height="700" viewBox="0 0 1510 700" fill="#8a8e92"><rect x="132.1" y="680" width="1.2" height="5"/><rect x="152.2" y="680" width="1.2" height="5"/><rect x="172.4" y="680" width="1.2" height="5"/><rect x="192.5" y="680" width="1.2" height="5"/><rect x="212.6" y="676" width="1.4" height="9"/><rect x="232.9" y="680" width="1.2" height="5"/><rect x="253.0" y="680" width="1.2" height="5"/><rect x="273.2" y="680" width="1.2" height="5"/><rect x="293.3" y="680" width="1.2" height="5"/><rect x="313.4" y="676" width="1.4" height="9"/><rect x="333.7" y="680" width="1.2" height="5"/><rect x="353.8" y="680" width="1.2" height="5"/><rect x="374.0" y="680" width="1.2" height="5"/><rect x="394.1" y="680" width="1.2" height="5"/><rect x="414.2" y="676" width="1.4" height="9"/><rect x="434.5" y="680" width="1.2" height="5"/><rect x="454.6" y="680" width="1.2" height="5"/><rect x="474.8" y="680" width="1.2" height="5"/><rect x="494.9" y="680" width="1.2" height="5"/><rect x="515.0" y="676" width="1.4" height="9"/><rect x="535.3" y="680" width="1.2" height="5"/><rect x="555.4" y="680" width="1.2" height="5"/><rect x="575.6" y="680" width="1.2" height="5"/><rect x="595.7" y="680" width="1.2" height="5"/><rect x="615.8" y="676" width="1.4" height="9"/><rect x="636.1" y="680" width="1.2" height="5"/><rect x="656.2" y="680" width="1.2" height="5"/><rect x="676.4" y="680" width="1.2" height="5"/><rect x="696.5" y="680" width="1.2" height="5"/><rect x="716.6" y="676" width="1.4" height="9"/><rect x="736.9" y="680" width="1.2" height="5"/><rect x="757.0" y="680" width="1.2" height="5"/><rect x="777.2" y="680" width="1.2" height="5"/><rect x="797.3" y="680" width="1.2" height="5"/><rect x="817.4" y="676" width="1.4" height="9"/><rect x="837.7" y="680" width="1.2" height="5"/><rect x="857.8" y="680" width="1.2" height="5"/><rect x="878.0" y="680" width="1.2" height="5"/><rect x="898.1" y="680" width="1.2" height="5"/><rect x="918.2" y="676" width="1.4" height="9"/><rect x="938.5" y="680" width="1.2" height="5"/><rect x="958.6" y="680" width="1.2" height="5"/><rect x="978.8" y="680" width="1.2" height="5"/><rect x="998.9" y="680" width="1.2" height="5"/><rect x="1019.0" y="676" width="1.4" height="9"/><rect x="1039.3" y="680" width="1.2" height="5"/><rect x="1059.4" y="680" width="1.2" height="5"/><rect x="1079.6" y="680" width="1.2" height="5"/><rect x="1099.7" y="680" width="1.2" height="5"/><rect x="1119.8" y="676" width="1.4" height="9"/><rect x="1140.1" y="680" width="1.2" height="5"/><rect x="1160.2" y="680" width="1.2" height="5"/><rect x="1180.4" y="680" width="1.2" height="5"/><rect x="1200.5" y="680" width="1.2" height="5"/><rect x="1220.6" y="676" width="1.4" height="9"/><rect x="1240.9" y="680" width="1.2" height="5"/><rect x="1261.0" y="680" width="1.2" height="5"/><rect x="1281.2" y="680" width="1.2" height="5"/><rect x="1301.3" y="680" width="1.2" height="5"/><rect x="1321.4" y="676" width="1.4" height="9"/><rect x="1341.7" y="680" width="1.2" height="5"/><rect x="1361.8" y="680" width="1.2" height="5"/><rect x="1382.0" y="680" width="1.2" height="5"/><rect x="1402.1" y="680" width="1.2" height="5"/><rect x="1422.2" y="676" width="1.4" height="9"/><rect x="1442.5" y="680" width="1.2" height="5"/><rect x="1462.6" y="680" width="1.2" height="5"/><rect x="1482.8" y="680" width="1.2" height="5"/><rect x="1502.9" y="680" width="1.2" height="5"/></svg>
  <!-- playhead -->
  <div class="a" style="left:112.3px;top:657px;width:1.3px;height:421px;background:#dc6482"></div>
  <div class="a" style="left:111px;top:657px;width:7px;height:11px;border-radius:0 4px 4px 0;background:#f06478"></div>
  <div class="a" style="left:112px;top:723px;width:11px;height:36px;border-radius:0 6px 6px 0;background:#e85a6c"></div>
  <svg style="left:112px;top:733px" width="8" height="16" viewBox="0 0 8 16"><path d="M5 2C2 4 1.5 9 3 11.5s3.5 1 3-1.5S3 8 2 10" fill="none" stroke="#f8d8dc" stroke-width="1.2"/></svg>
  <!-- track headers -->
  <div class="t" style="left:20px;top:868px;font-size:10px;color:#8e9296;-webkit-text-stroke:0">Video 1</div>
  <svg style="left:17px;top:885px" width="90" height="16" viewBox="0 0 90 16" fill="none" stroke="#c8cacc"><path d="M2.5 5h10v7.5h-10z M4 5V3.2a2 2 0 0 1 3.6-1.2" stroke-width="1.2"/><circle cx="7.5" cy="8.7" r="1" fill="#c8cacc" stroke="none"/><path d="M25 5h2.5l3.5-3v11l-3.5-3H25z M33.5 4.5c1 1 1 4 0 5 M35.5 3c2 2 2 7 0 9" stroke-width="1.2"/><path d="M49 7.5c2-3.5 4.5-5 6.5-5s4.5 1.5 6.5 5c-2 3.5-4.5 5-6.5 5S51 11 49 7.5z" stroke-width="1.2"/><circle cx="55.5" cy="7.5" r="2" fill="#c8cacc"/><g transform="translate(72 0)"><circle cx="6.5" cy="6.5" r="2.8" stroke-width="1.2"/><path d="M8.3 8.6l4.2 4.4a1.1 1.1 0 0 1-1.5 1.5L6.6 10.3" stroke-width="1.2"/><path d="M1.2 3.2l1.3 1.1 M0.5 7h1.7 M4.3 0.3l.3 1.7" stroke-width="1.1"/></g></svg>
  <div class="t" style="left:20px;top:925px;font-size:10px;color:#8e9296;-webkit-text-stroke:0">Audio 1</div>
  <svg style="left:17px;top:942px" width="90" height="16" viewBox="0 0 90 16" fill="none" stroke="#c8cacc"><path d="M2.5 5h10v7.5h-10z M4 5V3.2a2 2 0 0 1 3.6-1.2" stroke-width="1.2"/><circle cx="7.5" cy="8.7" r="1" fill="#c8cacc" stroke="none"/><path d="M25 5h2.5l3.5-3v11l-3.5-3H25z M33.5 4.5c1 1 1 4 0 5 M35.5 3c2 2 2 7 0 9" stroke-width="1.2"/><g transform="translate(48 0)"><circle cx="6.5" cy="6.5" r="2.8" stroke-width="1.2"/><path d="M8.3 8.6l4.2 4.4a1.1 1.1 0 0 1-1.5 1.5L6.6 10.3" stroke-width="1.2"/><path d="M1.2 3.2l1.3 1.1 M0.5 7h1.7 M4.3 0.3l.3 1.7" stroke-width="1.1"/></g></svg>
  <!-- clip -->
  <div class="a" style="left:113px;top:849px;width:117px;height:66px;border-radius:6px;background:#dcecec"></div>
  <svg style="left:115px;top:851px" width="113" height="62" viewBox="0 0 113 62">
    <defs><clipPath id="clc"><rect width="113" height="62" rx="4.5"/></clipPath><filter id="cb"><feGaussianBlur stdDeviation="0.5"/></filter>
      <linearGradient id="clg" x1="0" y1="0" x2="0" y2="62" gradientUnits="userSpaceOnUse">
        <stop offset="0" stop-color="#d6d9d9"/><stop offset="0.45" stop-color="#dcdede"/><stop offset="0.47" stop-color="#b8babc"/><stop offset="0.57" stop-color="#a4a7a9"/><stop offset="0.61" stop-color="#86b0a6"/><stop offset="0.66" stop-color="#48a693"/><stop offset="1" stop-color="#46a391"/>
      </linearGradient></defs>
    <g clip-path="url(#clc)">
      <rect width="113" height="62" fill="url(#clg)"/>
      <g filter="url(#cb)">
        <path d="M13 25l6-5 2 1-6 5z M21 28l4-7 2 1-4 7z" fill="#d03048"/>
        <path d="M22 15l9-2 1 3 4-1 .5 3-4 1-1 4-2-1 .5-3-8 1z" fill="#111"/>
        <path d="M101 4l5 3 4 6v6l-3-1-2-6-5-4z" fill="#b82840"/>
        <path d="M107 17l3 1v4l-3-1z" fill="#111"/>
      </g>
      <rect x="7" y="8" width="12" height="12" rx="2.5" fill="#f4f4f4" opacity=".55"/>
      <path d="M11 11.5v5l4-2.5z" fill="#b8babc"/>
      <text x="36" y="21" font-family="Liberation Sans" font-size="10" fill="#f8f8f8" opacity=".8">21827-336300</text>
      <path d="M96 3v15l3.4-3.2 2.4 5.3 2.1-1-2.4-5.2 4.6-.2z" fill="#fff" stroke="#222" stroke-width=".7"/>
    </g>
    <rect x=".5" y=".5" width="112" height="61" rx="4.5" fill="none" stroke="#14262a" stroke-width="1"/>
  </svg>
  <!-- bottom -->
  <svg style="left:55px;top:1064px" width="10" height="10" viewBox="0 0 10 10"><path d="M5 0.5L6 4 9.5 5 6 6 5 9.5 4 6 0.5 5 4 4z" fill="#c8cacc"/></svg>
  <div class="a" style="left:113px;top:1064px;width:1285px;height:12px;border-radius:0 6px 6px 0;background:#50555b"></div>
  <div class="a" style="left:112px;top:1063.5px;width:13px;height:13px;border-radius:50%;background:#7a7e82"></div>
  <div class="a" style="left:1385px;top:1063.5px;width:13px;height:13px;border-radius:50%;background:#8e9296"></div>
  <!-- ===== RIGHT PANEL ===== -->
  <div class="a" style="left:1517px;top:40px;width:395px;height:1038px;background:#242a30;border-radius:8px 8px 0 0;overflow:hidden">
    <div class="a" style="left:0;top:0;width:395px;height:39px;background:#0e1419"></div>
    <div class="a" style="left:10px;top:4px;width:61px;height:36px;border-radius:6px 6px 0 0;background:#242a30"></div>
    <div class="a" style="left:0;top:81px;width:390px;height:39px;background:#31373d"></div>
    <div class="a" style="left:0;top:495px;width:390px;height:40px;background:#31373d"></div>
    <div class="a" style="left:0;top:696px;width:395px;height:40px;background:#31373d"></div>
    <div class="a" style="left:391px;top:80px;width:4px;height:490px;border-radius:2px;background:#50555c"></div>
  </div>
  <div class="t" style="left:1542px;top:57px;font-size:12px;color:#5fd9c1">Video</div>
  <div class="t" style="left:1614px;top:57px;font-size:12px;color:#e2e4e6">Color</div>
  <div class="t" style="left:1685px;top:57px;font-size:12px;color:#e2e4e6">Speed</div>
  <div class="a" style="left:1533px;top:88px;width:53px;height:24px;border-radius:12px;background:#394046"></div>
  <div class="t" style="left:1546px;top:95px;font-size:12px;color:#5fd9c1">Basic</div>
  <div class="t" style="left:1609px;top:95px;font-size:12px;color:#e2e4e6">Mask</div>
  <div class="t" style="left:1672px;top:95px;font-size:12px;color:#e2e4e6">AI Tools</div>
  <div class="t" style="left:1748px;top:95px;font-size:12px;color:#e2e4e6">Animation</div>

  <!-- transform header -->
  <div class="a tg" style="top:133px"></div><div class="a tk" style="top:136px"></div>
  <div class="t" style="left:1565px;top:135px;font-size:12px;color:#eef0f2">Transform</div>
  <div class="a dm" style="top:135px"></div>

  <div class="t lb" style="top:182px">Scale</div>
  <svg style="left:1536px;top:208px" width="24" height="46" viewBox="0 0 24 46" fill="none">
    <path d="M5 11.5C5 8 7 6 10 6h10" stroke="#8a8e92" stroke-width="1.1"/>
    <path d="M5 34c0 3 2 6 5 6h10" stroke="#8a8e92" stroke-width="1.1"/>
    <rect x="1" y="22" width="9" height="7" rx="1" stroke="#5fd9c1" stroke-width="1.2"/><path d="M3 22v-2a2.5 2.5 0 0 1 5 0v2" stroke="#5fd9c1" stroke-width="1.2"/><circle cx="5.5" cy="25.5" r=".9" fill="#5fd9c1"/>
  </svg>
  <div class="t" style="left:1568px;top:209px;font-size:11px;color:#8a8e92">X</div>
  <div class="a" style="left:1587px;top:212px;width:158px;height:3.5px;border-radius:2px;background:#33383e"></div>
  <div class="a" style="left:1587px;top:212px;width:42px;height:3.5px;border-radius:2px;background:#d6d8da"></div>
  <div class="a" style="left:1622.5px;top:207.5px;width:12.5px;height:12.5px;border-radius:50%;background:#8c8f93;border:2px solid #dfe1e3"></div>
  <div class="a" style="left:1765px;top:203px;width:69px;height:23px;border-radius:4px;background:#1b1f24"></div>
  <div class="t" style="left:1774px;top:209px;font-size:11.5px;color:#e0e2e4">100.00</div>
  <div class="t" style="left:1821px;top:209px;font-size:11px;color:#b8bcc0">%</div>
  <div class="a dm" style="top:209px"></div>
  <div class="t" style="left:1568px;top:243px;font-size:11px;color:#8a8e92">Y</div>
  <div class="a" style="left:1587px;top:246px;width:158px;height:3.5px;border-radius:2px;background:#33383e"></div>
  <div class="a" style="left:1587px;top:246px;width:42px;height:3.5px;border-radius:2px;background:#d6d8da"></div>
  <div class="a" style="left:1622.5px;top:241.5px;width:12.5px;height:12.5px;border-radius:50%;background:#8c8f93;border:2px solid #dfe1e3"></div>
  <div class="a" style="left:1765px;top:237px;width:69px;height:23px;border-radius:4px;background:#1b1f24"></div>
  <div class="t" style="left:1774px;top:243px;font-size:11.5px;color:#e0e2e4">100.00</div>
  <div class="t" style="left:1821px;top:243px;font-size:11px;color:#b8bcc0">%</div>
  <div class="a dm" style="top:243px"></div>

  <div class="t lb" style="top:286px">Position</div>
  <div class="a dm" style="top:286px"></div>
  <div class="t" style="left:1533px;top:315px;font-size:11.5px;color:#8a8e92">X</div>
  <div class="a" style="left:1549px;top:309px;width:157px;height:23px;border-radius:4px;background:#1b1f24"></div>
  <div class="t" style="left:1559px;top:315px;font-size:11.5px;color:#e0e2e4">0.00</div>
  <div class="t" style="left:1689px;top:315px;font-size:11px;color:#8a8e92">px</div>
  <div class="t" style="left:1722px;top:315px;font-size:11.5px;color:#8a8e92">Y</div>
  <div class="a" style="left:1739px;top:309px;width:157px;height:23px;border-radius:4px;background:#1b1f24"></div>
  <div class="t" style="left:1748px;top:315px;font-size:11.5px;color:#e0e2e4">0.00</div>
  <div class="t" style="left:1877px;top:315px;font-size:11px;color:#8a8e92">px</div>

  <div class="t lb" style="top:358px">Path Curve</div>
  <div class="a" style="left:1872px;top:357px;width:24px;height:13px;border-radius:7px;border:1px solid #30353b;background:#262b31"></div>
  <div class="a" style="left:1876px;top:360px;width:7px;height:7px;border-radius:50%;background:#3a3f45"></div>

  <div class="t lb" style="top:398px">Rotate</div>
  <div class="a dm" style="top:398px"></div>
  <div class="a" style="left:1533.5px;top:420px;width:23px;height:23px;border-radius:50%;background:radial-gradient(circle at 45% 35%,#d4d6d8,#a4a7aa 70%,#8e9194)"></div>
  <div class="a" style="left:1542px;top:421.5px;width:6px;height:6px;border-radius:50%;background:#f4f6f8"></div>
  <div class="a" style="left:1574px;top:420px;width:323px;height:23px;border-radius:4px;background:#1a1e22"></div>
  <div class="t" style="left:1583px;top:426px;font-size:11.5px;color:#e0e2e4">0.00°</div>

  <div class="t lb" style="top:473px">Flip</div>
  <div class="a fb" style="left:1533px"></div>
  <div class="a fb" style="left:1626px"></div>
  <div class="a fb" style="left:1719px"></div>
  <div class="a fb" style="left:1811px"></div>
  <svg style="left:1567px;top:496px" width="16" height="14" viewBox="0 0 16 14" fill="none" stroke="#c8cacc" stroke-width="1.1"><path d="M7 1v12H1.5z M9 1v12h5.5z M8 0v14" /></svg>
  <svg style="left:1661px;top:495px" width="14" height="16" viewBox="0 0 14 16" fill="none" stroke="#c8cacc" stroke-width="1.1"><path d="M1 7h12L1 1.5z M1 9h12L1 14.5z"/></svg>
  <svg style="left:1752px;top:494px" width="16" height="16" viewBox="0 0 16 16" fill="none" stroke="#c8cacc" stroke-width="1.2"><rect x="1.5" y="5.5" width="9" height="9" rx="1"/><path d="M9 2a5 5 0 0 1 5 5 M12.5 1l-3.5 1 2 2.5"/></svg>
  <svg style="left:1845px;top:494px" width="16" height="16" viewBox="0 0 16 16" fill="none" stroke="#c8cacc" stroke-width="1.2"><rect x="5.5" y="5.5" width="9" height="9" rx="1"/><path d="M7 2a5 5 0 0 0-5 5 M3.5 1l3.5 1-2 2.5"/></svg>

  <!-- compositing -->
  <div class="a tg" style="top:548px"></div><div class="a tk" style="top:551px"></div>
  <div class="t" style="left:1565px;top:550px;font-size:12px;color:#eef0f2">Compositing</div>
  <div class="a dm" style="top:550px"></div>
  <div class="t lb" style="top:598px">Blend Mode</div>
  <div class="a" style="left:1534px;top:621px;width:362px;height:22px;border-radius:4px;background:#1a1e23"></div>
  <div class="t" style="left:1541px;top:627px;font-size:12px;color:#e0e2e4">Normal</div>
  <svg style="left:1880px;top:629px" width="8" height="5" viewBox="0 0 8 5"><path d="M0.8 0.8L4 4 7.2 0.8" fill="none" stroke="#c8cacc" stroke-width="1.1"/></svg>
  <div class="t lb" style="top:670px">Opacity</div>
  <div class="a dm" style="top:670px"></div>
  <div class="a" style="left:1534px;top:701.5px;width:266px;height:3.5px;border-radius:2px;background:#d6d8da"></div>
  <div class="a" style="left:1793.5px;top:696.5px;width:13px;height:13px;border-radius:50%;background:#8c8f93;border:2px solid #dfe1e3"></div>
  <div class="a" style="left:1825px;top:691px;width:72px;height:23px;border-radius:4px;background:#1b1f24"></div>
  <div class="t" style="left:1834px;top:698px;font-size:11.5px;color:#e0e2e4">100.00</div>

  <!-- background -->
  <div class="a" style="left:1533px;top:748px;width:24px;height:14px;border-radius:7px;border:1.5px solid #d0d2d4"></div>
  <div class="a" style="left:1536px;top:751px;width:8px;height:8px;border-radius:50%;background:#d0d2d4"></div>
  <div class="t" style="left:1565px;top:750px;font-size:12px;color:#eef0f2">Background</div>
  <svg style="left:1633px;top:749px" width="12" height="12" viewBox="0 0 12 12" fill="none" stroke="#b8babc" stroke-width="1"><circle cx="6" cy="6" r="5"/><path d="M4.3 4.5a1.8 1.8 0 1 1 2.5 1.6c-.5.3-.8.6-.8 1.2 M6 8.6v.6"/></svg>
  <div class="t" style="left:1533px;top:798px;font-size:11px;color:#50555a">Type</div>
  <div class="a" style="left:1821px;top:792px;width:74px;height:23px;border-radius:5px;background:#2a2f35"></div>
  <div class="t" style="left:1827px;top:798px;font-size:11px;color:#50555a">Apply to All</div>
  <div class="a" style="left:1533px;top:820px;width:362px;height:22px;border-radius:4px;background:#1c2024"></div>
  <div class="t" style="left:1541px;top:826px;font-size:11px;color:#5c6166">Blur</div>
  <svg style="left:1880px;top:829px" width="8" height="5" viewBox="0 0 8 5"><path d="M0.8 0.8L4 4 7.2 0.8" fill="none" stroke="#4a4f54" stroke-width="1.1"/></svg>
  <div class="t" style="left:1533px;top:870px;font-size:11px;color:#50555a">Blur Style</div>
  <div class="a" style="left:1533px;top:892px;width:362px;height:22px;border-radius:4px;background:#1c2024"></div>
  <div class="t" style="left:1541px;top:898px;font-size:11px;color:#5c6166">Basic blur</div>
  <svg style="left:1880px;top:901px" width="8" height="5" viewBox="0 0 8 5"><path d="M0.8 0.8L4 4 7.2 0.8" fill="none" stroke="#4a4f54" stroke-width="1.1"/></svg>
  <div class="t" style="left:1533px;top:942px;font-size:11px;color:#50555a">Level of Blur</div>
  <div class="a" style="left:1533px;top:959px;width:54px;height:54px;border-radius:5px;border:1px solid #3a4046;background:#252a30"></div>
  <div class="a" style="left:1545px;top:971px;width:30px;height:30px;border-radius:4px;background:#2c3237;filter:blur(4px)"></div>
  <div class="a" style="left:1612px;top:971px;width:30px;height:30px;border-radius:6px;background:#2c3237;filter:blur(6px)"></div>
  <div class="a" style="left:1680px;top:971px;width:30px;height:30px;border-radius:6px;background:#2c3237;filter:blur(7px)"></div>
  <div class="a" style="left:1533px;top:1038px;width:40px;height:23px;border-radius:5px;background:#363b41"></div>
  <div class="t" style="left:1538px;top:1044px;font-size:11.5px;color:#f0f2f4">Reset</div>
</div></body></html>
